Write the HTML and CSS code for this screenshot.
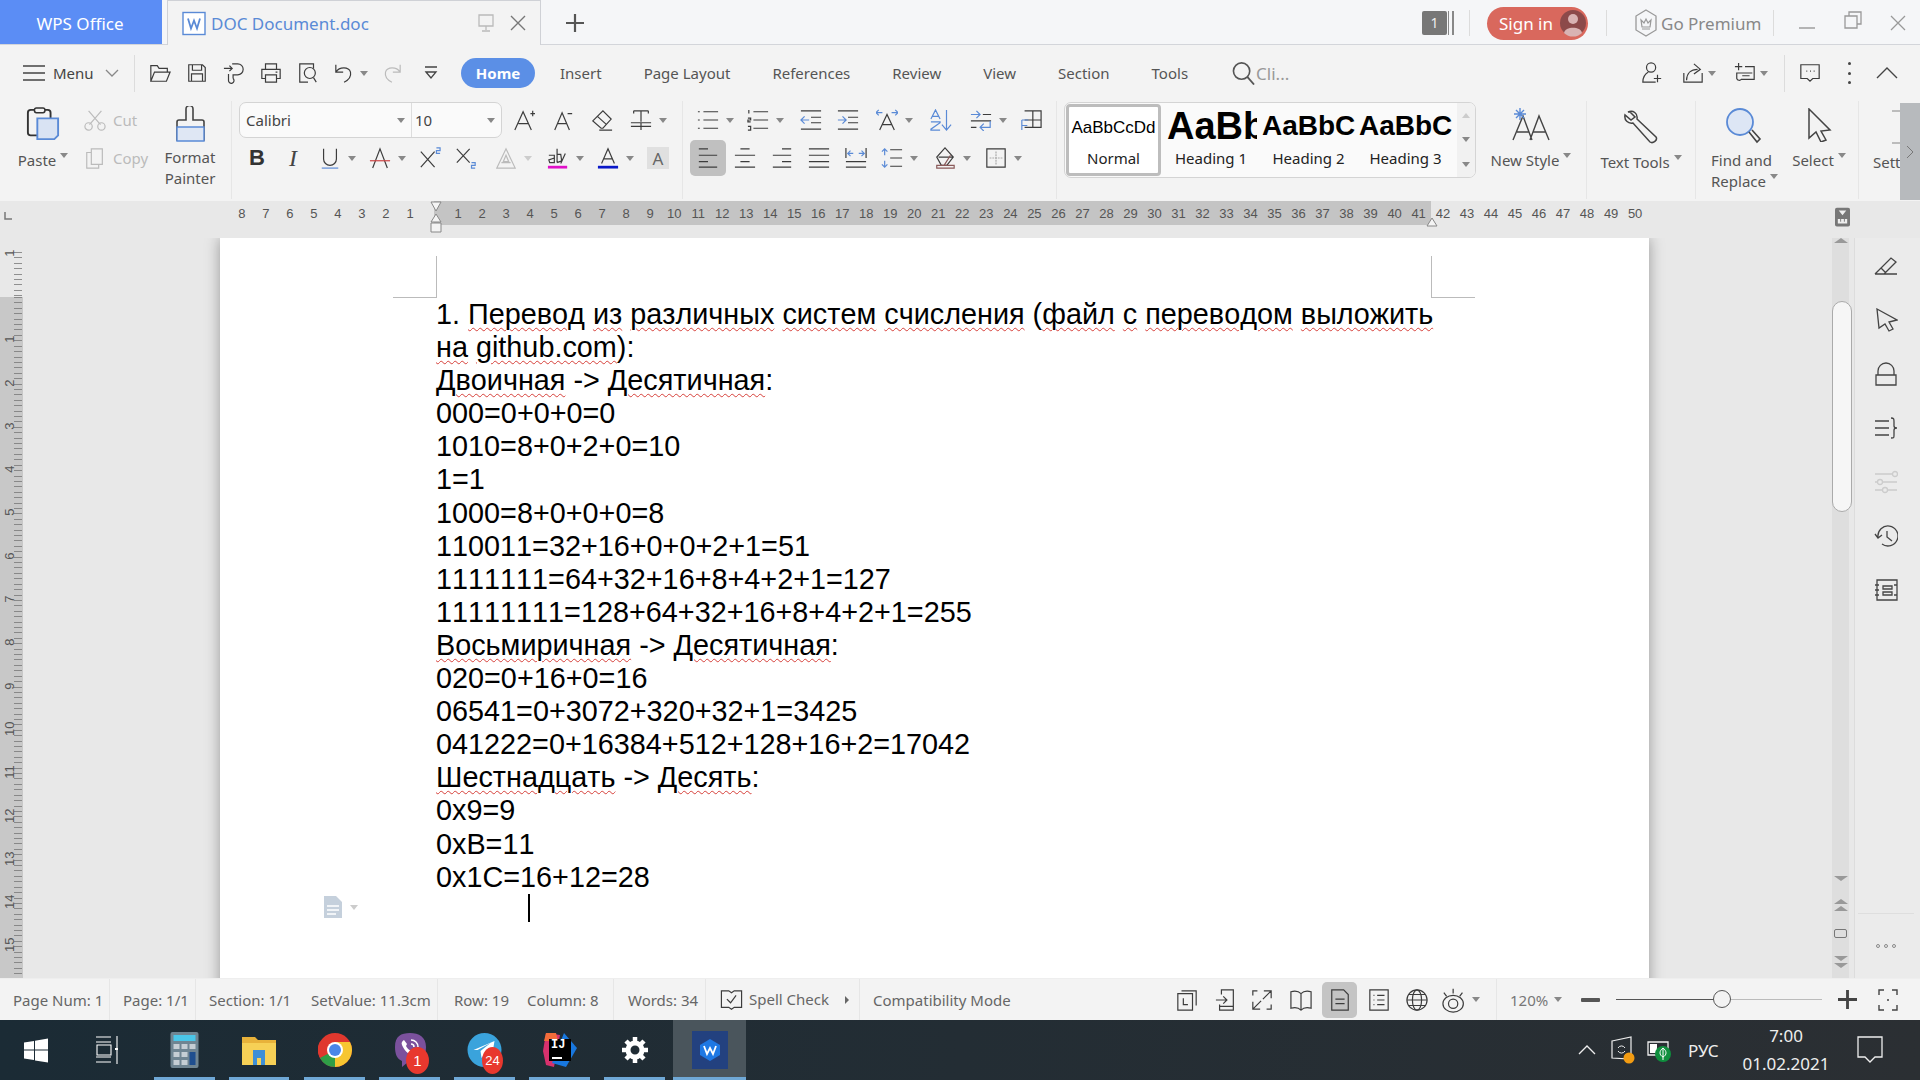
FILE: index.html
```html
<!DOCTYPE html>
<html lang="ru">
<head>
<meta charset="utf-8">
<title>DOC Document.doc - WPS Office</title>
<link rel="stylesheet" href="styles.css">
</head>
<body>
<header class="titlebar">
  <div class="tab-home">WPS Office</div>
  <div class="tab-doc">
    <svg class="i-w" viewBox="0 0 24 24"><rect x="1" y="1" width="22" height="22" fill="#fff" stroke="#5a8ad6" stroke-width="1.4"/><path d="M6 7l3 10 3-8 3 8 3-10" fill="none" stroke="#5a8ad6" stroke-width="1.8"/></svg>
    <span class="doc-name">DOC Document.doc</span>
    <svg class="i-mon" viewBox="0 0 16 18"><path d="M1 1h14v11H1zM8 12v4M4 17h8" fill="none" stroke="#bbb" stroke-width="1.3"/></svg>
    <svg class="i-x" viewBox="0 0 16 16"><path d="M1 1l14 14M15 1L1 15" fill="none" stroke="#777" stroke-width="1.4"/></svg>
  </div>
  <svg class="i-plus" viewBox="0 0 18 18"><path d="M9 0v18M0 9h18" fill="none" stroke="#555" stroke-width="2.2"/></svg>
  <div class="grow"></div>
  <div class="badge">1</div><div class="badge-bars"></div>
  <div class="vsep vsep-a"></div>
  <div class="signin">Sign in
    <svg class="avatar" viewBox="0 0 26 26"><circle cx="13" cy="13" r="13" fill="#8c4a4a"/><circle cx="13" cy="9" r="5" fill="#d9b3b3"/><path d="M4 23c1-7 17-7 18 0a13 13 0 0 1-18 0z" fill="#d9b3b3"/></svg>
  </div>
  <div class="vsep vsep-b"></div>
  <svg class="i-prem" viewBox="0 0 22 28"><path d="M11 1l10 6v14l-10 6-10-6V7z" fill="none" stroke="#999" stroke-width="1.3"/><path d="M6 11l3 3 2-4 2 4 3-3-1 7H7zM7 20h8" fill="none" stroke="#999" stroke-width="1.2"/></svg>
  <span class="premium">Go Premium</span>
  <div class="vsep vsep-c"></div>
  <svg class="i-min" viewBox="0 0 16 2"><path d="M0 1h16" stroke="#999" stroke-width="1.4"/></svg>
  <svg class="i-res" viewBox="0 0 18 18"><path d="M1 5h12v12H1zM5 5V1h12v12h-4" fill="none" stroke="#999" stroke-width="1.3"/></svg>
  <svg class="i-cls" viewBox="0 0 16 16"><path d="M1 1l14 14M15 1L1 15" fill="none" stroke="#999" stroke-width="1.3"/></svg>
</header>

<section class="ribbon">
  <nav class="tabsrow">
    <svg class="i-menu" viewBox="0 0 22 16"><path d="M0 1h22M0 8h22M0 15h22" stroke="#444" stroke-width="1.4"/></svg>
    <span class="menu-t">Menu</span>
    <svg class="i-chev" viewBox="0 0 14 8"><path d="M1 1l6 6 6-6" fill="none" stroke="#888" stroke-width="1.3"/></svg>
    <div class="qsep"></div>
    <div class="qat">
      <span class="q"><svg class="ic" viewBox="0 0 24 24"><path d="M2 21V4h7l2 3h9v4M2 21l4-10h17l-4 10z"/></svg></span>
      <span class="q"><svg class="ic" viewBox="0 0 24 24"><path d="M3 3h15l3 3v15H3zM7 3v6h10V3M6 21v-8h12v8"/></svg></span>
      <span class="q"><svg class="ic" viewBox="0 0 24 24"><path d="M1 7h9M7 4l3 3-3 3M10 2h6a6 6 0 0 1 0 12h-5v4M11 18a3 3 0 1 1-5 2v-7"/></svg></span>
      <span class="q"><svg class="ic" viewBox="0 0 24 24"><path d="M6 8V2h12v6M6 18H2V8h20v10h-4M6 14h12v8H6zM17 11h2"/></svg></span>
      <span class="q"><svg class="ic" viewBox="0 0 24 24"><path d="M18 7V2H3v20h9M21 22l-3-5"/><circle cx="14" cy="12" r="6"/></svg></span>
      <span class="q q-undo"><svg class="ic" viewBox="0 0 24 24"><path d="M2 3v8h8M2 11c4-6 14-6 16 0 1 5-3 9-7 11"/></svg><i class="caret"></i></span>
      <span class="q q-redo"><svg class="ic ic-l" viewBox="0 0 24 24"><path d="M22 3v8h-8M22 11c-4-6-14-6-16 0-1 5 3 9 7 11"/></svg></span>
      <span class="q q-more"><svg class="ic16" viewBox="0 0 16 16"><path d="M2 2h12M3 7l5 6 5-6z"/></svg></span>
    </div>
    <span class="pill">Home</span>
    <span class="t t-ins">Insert</span>
    <span class="t t-pl">Page Layout</span>
    <span class="t t-ref">References</span>
    <span class="t t-rev">Review</span>
    <span class="t t-view">View</span>
    <span class="t t-sec">Section</span>
    <span class="t t-tools">Tools</span>
    <svg class="i-search" viewBox="0 0 24 24"><circle cx="10" cy="10" r="8.5" fill="none" stroke="#555" stroke-width="1.7"/><path d="M16 16l7 8" stroke="#555" stroke-width="1.9"/></svg>
    <span class="cli">Cli...</span>
    <div class="grow"></div>
    <span class="q q-a"><svg class="ic" viewBox="0 0 24 24"><circle cx="11" cy="6" r="5"/><path d="M8 11C3 14 2 18 2 22h14M18 14v8M14 18h8"/></svg></span>
    <span class="q q-b"><svg class="ic" viewBox="0 0 24 24"><path d="M2 12v10h20v-10M5 20c0-8 5-12 12-12M13 2l7 6-7 5"/></svg><i class="caret"></i></span>
    <span class="q q-c"><svg class="ic" viewBox="0 0 24 24"><path d="M5 1v8M1 5h8M12 5h10v14H8a3 3 0 0 1-5-1v-6h17M9 15h8"/></svg><i class="caret"></i></span>
    <div class="qsep qsep-r"></div>
    <span class="q q-d"><svg class="ic" viewBox="0 0 24 24"><path d="M2 3h20v15h-7l-3 3-3-3H2zM8 10h1M12 10h1M16 10h1"/></svg></span>
    <span class="dots"><i></i><i></i><i></i></span>
    <svg class="i-up" viewBox="0 0 22 12"><path d="M1 11L11 1l10 10" fill="none" stroke="#444" stroke-width="1.4"/></svg>
  </nav>

  <div class="toolsrow">
    <div class="grp g-clip">
      <div class="big b-paste">
        <svg class="bi" viewBox="0 0 36 36"><path d="M24 30H5a3 3 0 0 1-3-3V6a3 3 0 0 1 3-3h18a3 3 0 0 1 3 3v6" fill="none" stroke="#333" stroke-width="2"/><rect x="9" y="1" width="11" height="5" rx="2" fill="#f3f3f3" stroke="#333" stroke-width="1.6"/><path d="M12 12h22v18l-4 4H12z" fill="#d9e3f3" stroke="#5a8ad6" stroke-width="2"/></svg>
        <span class="lbl">Paste<i class="caret up"></i></span>
      </div>
      <div class="cc">
        <div class="ccr"><svg class="ic dim" viewBox="0 0 24 24"><path d="M5 2l13 15M19 2L6 17"/><circle cx="5" cy="19" r="4"/><circle cx="19" cy="19" r="4"/></svg><span class="lbl off">Cut</span></div>
        <div class="ccr"><svg class="ic dim" viewBox="0 0 24 24"><path d="M8 2h12v17H8zM8 6H3v17h13v-4"/></svg><span class="lbl off">Copy</span></div>
      </div>
      <div class="big b-fp">
        <svg class="bi" viewBox="0 0 32 36"><path d="M12 14V3a3 3 0 0 1 7 0v11h9a2 2 0 0 1 2 2v18H3V16a2 2 0 0 1 2-2z" fill="none" stroke="#444" stroke-width="1.6"/><path d="M3 21h27v14H3z" fill="#dfe7f4" stroke="#5a8ad6" stroke-width="1.4"/></svg>
        <span class="lbl lh">Format<br>Painter</span>
      </div>
    </div>

    <div class="grp g-font">
      <div class="r">
        <div class="fontbox">
          <span class="fb-name">Calibri<i class="caret"></i></span>
          <span class="fb-size">10<i class="caret"></i></span>
        </div>
        <span class="tb w39"><svg class="ic" viewBox="0 0 24 24"><path d="M2 23L11 3l9 20M6 16h11M19 5h5M21.500 2v6"/></svg></span>
        <span class="tb w39"><svg class="ic" viewBox="0 0 24 24"><path d="M3 23l8-19 8 19M6 16h10M17 5h5"/></svg></span>
        <span class="tb w39"><svg class="ic" viewBox="0 0 24 24"><path d="M2 13L13 2l9 9-9 10h-2zM7 8l10 9M9 23h14"/></svg></span>
        <span class="tb w50"><svg class="ic" viewBox="0 0 24 24"><path d="M4 2h16M4 2v3M20 2v3M12 2v12M1 15h22M1 19h22M12 15v8" /></svg><i class="caret"></i></span>
      </div>
      <div class="r r2">
        <span class="tb w38"><b class="g g-b">B</b></span>
        <span class="tb w32"><i class="g g-i">I</i></span>
        <span class="tb w50"><svg class="ic" viewBox="0 0 24 24"><path d="M5 2v11a7 7 0 0 0 14 0V2"/><path class="st-b" d="M3 23h18"/></svg><i class="caret"></i></span>
        <span class="tb w50"><svg class="ic" viewBox="0 0 24 24"><path d="M4 23L12 2l8 21"/><path class="st-r" d="M1 15h22"/></svg><i class="caret"></i></span>
        <span class="tb w36"><svg class="ic" viewBox="0 0 24 24"><path d="M2 5l15 17M17 5L2 22"/><path class="st-bl" d="M19 1h4v3h-4v3h4"/></svg></span>
        <span class="tb w40"><svg class="ic" viewBox="0 0 24 24"><path d="M2 2l14 15M16 2L2 17"/><path class="st-bl" d="M18 17h4v3h-4v3h4"/></svg></span>
        <span class="tb w52"><svg class="ic dim" viewBox="0 0 24 24"><path d="M2 23L12 2l10 21zM7 17h10"/><path d="M9 16l3-7 3 7z"/></svg><i class="caret light"></i></span>
        <span class="tb w50"><svg class="ic" viewBox="0 0 24 24"><path d="M2 9h6v8H3l-1-3 6-2M11 2v15M11 8h4l1 7-5 2M20 7l-5 11"/><path class="st-m" d="M1 22h21"/></svg><i class="caret"></i></span>
        <span class="tb w45"><svg class="ic" viewBox="0 0 24 24"><path d="M5 18L12 2l7 16M7 13h10"/><path class="st-d" d="M1 22h22"/></svg><i class="caret"></i></span>
        <span class="tb shade">A</span>
      </div>
    </div>

    <div class="grp g-para">
      <div class="r r-p1">
        <span class="tb w50"><svg class="ic" viewBox="0 0 24 24"><path d="M7 3h16M7 12h16M7 21h16M1 3h2M1 12h2M1 21h2"/></svg><i class="caret"></i></span>
        <span class="tb w53"><svg class="ic" viewBox="0 0 24 24"><path d="M7 3h16M7 12h16M7 21h16M2 1v4M1 10h3v2H1v2h3M1 19h3v4H1"/></svg><i class="caret"></i></span>
        <span class="tb w37"><svg class="ic" viewBox="0 0 24 24"><path d="M1 2h22M12 9h11M12 15h11M1 22h22"/><path class="st-bl" d="M10 12H2M5 8l-4 4 4 4"/></svg></span>
        <span class="tb w39"><svg class="ic" viewBox="0 0 24 24"><path d="M1 2h22M12 9h11M12 15h11M1 22h22"/><path class="st-bl" d="M1 12h8M6 8l4 4-4 4"/></svg></span>
        <span class="tb w54"><svg class="ic" viewBox="0 0 24 24"><path d="M4 23L12 6l8 17M7 17h10"/><path class="st-bl" d="M1 4h6M3 1L0 4l3 3M17 4h6M21 1l3 3-3 3"/></svg><i class="caret"></i></span>
        <span class="tb w40"><svg class="ic" viewBox="0 0 24 24"><path class="st-bl" d="M1 11l5-10 5 10M3 8h6M1 14h10v1L1 22v1h10M18 1v21M13 17l5 6 5-6"/></svg></span>
        <span class="tb w50"><svg class="ic" viewBox="0 0 24 24"><path d="M14 6h9M1 13h22M1 20h6"/><path class="st-bl" d="M1 6h9M7 2l4 4-4 4M22 13v7H12M15 16l-4 4 4 4"/></svg><i class="caret"></i></span>
        <span class="tb"><svg class="ic" viewBox="0 0 24 24"><path d="M5 2h18v18H5M14 2v18M5 12h18"/><path class="st-bl" d="M2 12v11M2 12h7M2 18h6"/></svg></span>
      </div>
      <div class="r r-p2">
        <span class="tb active"><svg class="ic" viewBox="0 0 24 24"><path d="M2 2h10M2 9h20M2 16h10M2 22h20"/></svg></span>
        <span class="tb w37"><svg class="ic" viewBox="0 0 24 24"><path d="M7 2h10M1 9h22M7 16h10M1 22h22"/></svg></span>
        <span class="tb w37"><svg class="ic" viewBox="0 0 24 24"><path d="M12 2h10M2 9h20M12 16h10M2 22h20"/></svg></span>
        <span class="tb w37"><svg class="ic" viewBox="0 0 24 24"><path d="M1 2h22M1 9h22M1 16h22M1 22h22"/></svg></span>
        <span class="tb w36"><svg class="ic" viewBox="0 0 24 24"><path d="M1 1v11M23 1v11M1 22h22M1 16h22"/><path class="st-bl" d="M9 7H3M6 4L3 7l3 3M15 7h6M18 4l3 3-3 3"/></svg></span>
        <span class="tb w53"><svg class="ic" viewBox="0 0 24 24"><path d="M10 3h13M10 12h13M10 21h13"/><path class="st-bl" d="M4 2v7M1 5l3-3 3 3M4 15v7M1 19l3 3 3-3"/></svg><i class="caret"></i></span>
        <span class="tb w51"><svg class="ic" viewBox="0 0 24 24"><path d="M12 1l9 10-7 9H8l-5-9zM5 11h16"/><path class="st-br" d="M3 20h19v3H3zM18 9l-7 11"/></svg><i class="caret"></i></span>
        <span class="tb"><svg class="ic" viewBox="0 0 24 24"><path d="M2 2h20v20H2z"/><path class="st-g" d="M12 5v14M5 12h14"/></svg><i class="caret"></i></span>
      </div>
    </div>

    <div class="grp g-style">
      <div class="stylebox">
        <div class="st st-n"><span class="sample s-n">AaBbCcDd</span><span class="st-l">Normal</span></div>
        <div class="st st-1"><span class="sample s-1">AaBb</span><span class="st-l">Heading 1</span></div>
        <div class="st st-2"><span class="sample s-2">AaBbC</span><span class="st-l">Heading 2</span></div>
        <div class="st st-3"><span class="sample s-3">AaBbC</span><span class="st-l">Heading 3</span></div>
        <div class="st-sc"><i class="caret up pale"></i><i class="caret"></i><i class="caret more"></i></div>
      </div>
      <div class="big b-new">
        <svg class="bi bi-new" viewBox="0 0 40 34"><path d="M2 33L12 9l9 24M6 25h12M19 33L28 9l10 24M22 25h13" fill="none" stroke="#444" stroke-width="1.4"/><path d="M9 1v12M3 7h12M5 3l8 8M13 3l-8 8" stroke="#5a8ad6" stroke-width="1.4"/></svg>
        <span class="lbl lbl-nw">New Style<i class="caret up"></i></span>
      </div>
    </div>

    <div class="grp g-tt">
      <div class="big">
        <svg class="bi bi-tt" viewBox="0 0 34 34"><path d="M4 2c5-2 10 1 9 7l19 18c2 3-3 7-6 5L9 13C4 14 0 10 1 5l6 5 4-3-5-5z" fill="none" stroke="#444" stroke-width="1.5"/></svg>
        <span class="lbl lbl-nw lbl-tt">Text Tools<i class="caret up"></i></span>
      </div>
    </div>

    <div class="grp g-fr">
      <div class="big b-find">
        <svg class="bi bi-f" viewBox="0 0 36 36"><ellipse cx="14" cy="14" rx="13" ry="13" fill="#dde6f5" stroke="#5a8ad6" stroke-width="1.8"/><path d="M23 24l8 10 3-3-8-9" fill="none" stroke="#444" stroke-width="1.6"/></svg>
        <span class="lbl lh lbl-l">Find and<br>Replace<i class="caret up"></i></span>
      </div>
      <div class="big b-sel">
        <svg class="bi bi-s" viewBox="0 0 26 34"><path d="M3 1l21 21-9 1 5 9-5 2-5-10-7 6z" fill="none" stroke="#444" stroke-width="1.5"/></svg>
        <span class="lbl lbl-nw lbl-tt">Select<i class="caret up"></i></span>
      </div>
    </div>

    <div class="grp g-set">
      <div class="big">
        <svg class="bi bi-set" viewBox="0 0 30 34"><path d="M2 1h12v32H2M20 12v12" fill="none" stroke="#aaa" stroke-width="1.4"/></svg>
        <span class="lbl lbl-nw lbl-tt">Settings</span>
      </div>
    </div>
    <div class="rib-next"><svg class="i-nx" viewBox="0 0 8 14"><path d="M1 1l6 6-6 6" fill="none" stroke="#777" stroke-width="1"/></svg></div>
  </div>
</section>

<div class="hruler">
  <svg class="i-tabstop" viewBox="0 0 8 8"><path d="M1 0v7h7" fill="none" stroke="#777" stroke-width="1.5"/></svg>
  <div class="rul-l">
    <span>8</span><span>7</span><span>6</span><span>5</span><span>4</span><span>3</span><span>2</span><span>1</span>
  </div>
  <div class="rul-band">
    <span>1</span><span>2</span><span>3</span><span>4</span><span>5</span><span>6</span><span>7</span><span>8</span><span>9</span><span>10</span><span>11</span><span>12</span><span>13</span><span>14</span><span>15</span><span>16</span><span>17</span><span>18</span><span>19</span><span>20</span><span>21</span><span>22</span><span>23</span><span>24</span><span>25</span><span>26</span><span>27</span><span>28</span><span>29</span><span>30</span><span>31</span><span>32</span><span>33</span><span>34</span><span>35</span><span>36</span><span>37</span><span>38</span><span>39</span><span>40</span><span>41</span>
  </div>
  <div class="rul-r">
    <span>42</span><span>43</span><span>44</span><span>45</span><span>46</span><span>47</span><span>48</span><span>49</span><span>50</span>
  </div>
  <svg class="mk-l" viewBox="0 0 12 32"><path d="M1 1h10L6 10zM6 13l5 8H1zM1 22h10v9H1z" fill="#f4f4f4" stroke="#888"/></svg>
  <svg class="mk-r" viewBox="0 0 12 10"><path d="M6 1l5 8H1z" fill="#f4f4f4" stroke="#888"/></svg>
  <svg class="i-rt" viewBox="0 0 16 20"><rect width="16" height="20" rx="2" fill="#777"/><path d="M4 3h8L8 8zM3 12h10v5H3z" fill="#eee"/><path d="M6 12v3M10 12v3" stroke="#777"/></svg>
</div>

<main class="main">
  <div class="vruler">
    <div class="vr-top"><span class="vn vn-top">1</span></div>
    <div class="vr-band">
      <div class="vc"><span class="vn">1</span></div><div class="vc"><span class="vn">2</span></div><div class="vc"><span class="vn">3</span></div><div class="vc"><span class="vn">4</span></div><div class="vc"><span class="vn">5</span></div><div class="vc"><span class="vn">6</span></div><div class="vc"><span class="vn">7</span></div><div class="vc"><span class="vn">8</span></div><div class="vc"><span class="vn">9</span></div><div class="vc"><span class="vn">10</span></div><div class="vc"><span class="vn">11</span></div><div class="vc"><span class="vn">12</span></div><div class="vc"><span class="vn">13</span></div><div class="vc"><span class="vn">14</span></div><div class="vc"><span class="vn">15</span></div>
    </div>
  </div>
  <div class="docarea">
    <article class="page">
      <div class="crop crop-l"></div>
      <div class="crop crop-r"></div>
      <p class="line"><span>1. </span><span class="sp">Перевод</span> <span class="sp">из</span> <span class="sp">различных</span> <span class="sp">систем</span> <span class="sp">счисления</span> (<span class="sp">файл</span> <span class="sp">с</span> <span class="sp">переводом</span> <span class="sp">выложить</span></p>
      <p class="line"><span class="sp">на</span> <span class="sp">github.com</span>):</p>
      <p class="line"><span class="sp">Двоичная</span> -&gt; <span class="sp">Десятичная</span>:</p>
      <p class="line">000=0+0+0=0</p>
      <p class="line">1010=8+0+2+0=10</p>
      <p class="line">1=1</p>
      <p class="line">1000=8+0+0+0=8</p>
      <p class="line">110011=32+16+0+0+2+1=51</p>
      <p class="line">1111111=64+32+16+8+4+2+1=127</p>
      <p class="line">11111111=128+64+32+16+8+4+2+1=255</p>
      <p class="line"><span class="sp">Восьмиричная</span> -&gt; <span class="sp">Десятичная</span>:</p>
      <p class="line">020=0+16+0=16</p>
      <p class="line">06541=0+3072+320+32+1=3425</p>
      <p class="line">041222=0+16384+512+128+16+2=17042</p>
      <p class="line"><span class="sp">Шестнадцать</span> -&gt; <span class="sp">Десять</span>:</p>
      <p class="line">0x9=9</p>
      <p class="line">0xB=11</p>
      <p class="line">0x1C=16+12=28</p>
      <p class="line"><span class="cursor"></span></p>
      <div class="para-mark">
        <svg class="i-para" viewBox="0 0 20 24"><path d="M1 1h12l6 6v16H1z" fill="#c5d0dc"/><path d="M4 11h12M4 15h12M4 19h9" stroke="#fff" stroke-width="1.5"/></svg>
        <i class="caret light"></i>
      </div>
    </article>
  </div>
  <div class="scroll">
    <i class="sa up"></i>
    <div class="thumb"></div>
    <div class="grow"></div>
    <i class="sa dn"></i>
    <i class="sa up dbl"></i><i class="sa up dbl2"></i>
    <i class="sq"></i>
    <i class="sa dn dbl"></i><i class="sa dn dbl2"></i>
  </div>
  <aside class="side">
    <div class="grip"></div>
    <svg class="si" viewBox="0 0 24 24"><path d="M1 20L17 4l5 4-12 12M1 20h22M7 14l5 5"/></svg>
    <svg class="si" viewBox="0 0 24 24"><path d="M3 1l20 11-8 2 4 7-4 2-4-7-6 4z"/></svg>
    <svg class="si" viewBox="0 0 24 24"><path d="M2 13h20v10H2zM4 13V9a8 8 0 0 1 16 0v4"/></svg>
    <svg class="si" viewBox="0 0 24 24"><path d="M1 5h14M1 12h14M1 19h14M17 2c3 0 3 1 3 4v4c0 1 1 2 3 2-2 0-3 1-3 2v5c0 3 0 3-3 3"/></svg>
    <svg class="si faint" viewBox="0 0 24 24"><path d="M1 4h18M1 12h3M9 12h14M1 20h8M14 20h9"/><circle cx="21" cy="4" r="2.500"/><circle cx="6" cy="12" r="2.500"/><circle cx="11" cy="20" r="2.500"/></svg>
    <svg class="si" viewBox="0 0 24 24"><path d="M1 10l3 4 4-3M4 13A10 10 0 1 1 8 20M13 7v6l5 4"/></svg>
    <svg class="si" viewBox="0 0 24 24"><path d="M3 2h20v20H3zM1 7h4M1 12h4M1 17h4M9 8h9v3H9zM9 14h9v3H9zM20 7h3M20 17h3"/></svg>
    <div class="grow"></div>
    <div class="side-more"><i></i><i></i><i></i></div>
  </aside>
</main>

<footer class="status">
  <span class="s s1">Page Num: 1</span>
  <span class="s s2">Page: 1/1</span>
  <span class="s s3">Section: 1/1</span>
  <span class="s s4">SetValue: 11.3cm</span>
  <span class="s s5">Row: 19</span>
  <span class="s s6">Column: 8</span>
  <span class="s s7">Words: 34</span>
  <span class="s s8"><svg class="ic ic-s" viewBox="0 0 24 24"><path d="M1 2h8l3 2 3-2h8v18h-8l-3 2-3-2H1zM7 11l4 4 6-8"/></svg><span class="spell">Spell Check</span><i class="tri"></i></span>
  <span class="s s9">Compatibility Mode</span>
  <div class="grow"></div>
  <span class="v v1"><svg class="ic ic-v" viewBox="0 0 24 24"><path d="M2 5h16v18H2zM6 2h16v16M8 10v7h5"/></svg></span>
  <span class="v v2"><svg class="ic ic-v" viewBox="0 0 24 24"><path d="M7 6V1h13v22H5v-6M1 12h11M9 8l4 4-4 4M5 19h15"/></svg></span>
  <span class="v v3"><svg class="ic ic-v" viewBox="0 0 24 24"><path d="M14 2h8v8M22 2L13 11M10 22H2v-8M2 22l9-9M2 7V2h5M22 17v5h-5"/></svg></span>
  <span class="v v4"><svg class="ic ic-v" viewBox="0 0 24 24"><path d="M12 5v18M12 5C9 2 5 2 1 3v18c4-1 8-1 11 2 3-3 7-3 11-2V3c-4-1-8-1-11 2"/></svg></span>
  <span class="v v5"><svg class="ic ic-v" viewBox="0 0 24 24"><path d="M3 1h13l5 5v17H3zM7 11h10M7 16h10"/></svg></span>
  <span class="v v6"><svg class="ic ic-v" viewBox="0 0 24 24"><path d="M2 1h20v22H2zM10 7h8M10 12h8M10 17h8M6 7h1M6 12h1M6 17h1"/></svg></span>
  <span class="v v7"><svg class="ic ic-v" viewBox="0 0 24 24"><circle cx="12" cy="12" r="11"/><ellipse cx="12" cy="12" rx="5" ry="11"/><path d="M1 12h22M3 6h18M3 18h18"/></svg></span>
  <span class="v v8"><svg class="ic ic-e" viewBox="0 0 30 28"><ellipse cx="13" cy="18" rx="11" ry="9"/><circle cx="13" cy="18" r="5"/><path d="M3 6l3 4M13 2v5M23 6l-3 4"/></svg><i class="caret"></i></span>
  <div class="ssep"></div>
  <span class="zoompct">120%<i class="caret"></i></span>
  <span class="zm"></span>
  <div class="slider"><div class="slider-on"></div><div class="knob"></div></div>
  <svg class="i-zp" viewBox="0 0 20 20"><path d="M10 0v20M0 10h20" stroke="#444" stroke-width="3"/></svg>
  <svg class="i-fs" viewBox="0 0 20 22"><path d="M1 6V1h5M14 1h5v5M19 16v5h-5M6 21H1v-5M9 11h2" fill="none" stroke="#444" stroke-width="1.4"/></svg>
</footer>

<nav class="taskbar">
  <svg class="tk i-win" viewBox="0 0 24 24"><path d="M0 4l10-1.500V11H0zM11 2.300L24 0v11H11zM0 12h10v9.500L0 20zM11 12h13v12l-13-2z" fill="#fff"/></svg>
  <svg class="tk i-tv" viewBox="0 0 24 30"><path d="M1 2h15M1 7h15M1 22h15M1 27h15M2 10h14v10H2zM22 1v28" fill="none" stroke="#fff" stroke-width="1.1"/><path d="M20 13h3v2h-3z" fill="#fff"/></svg>
  <span class="app a-calc"><svg viewBox="0 0 28 36"><rect width="28" height="36" rx="2" fill="#6f8592"/><rect x="3" y="3" width="22" height="6" fill="#4ac6e8"/><path d="M3 12h6v5H3zM11 12h6v5h-6zM19 12h6v5h-6zM3 20h6v5H3zM11 20h6v5h-6zM3 28h6v5H3zM11 28h6v5h-6z" fill="#c5ced4"/><rect x="19" y="20" width="6" height="13" fill="#1f4f8f"/></svg></span>
  <span class="app a-fold"><svg viewBox="0 0 34 30"><path d="M0 2h13l3 3h18v6H0z" fill="#e8b23a"/><path d="M0 8h34v22H0z" fill="#f6d056"/><path d="M11 15h12v15h-4v-7h-4v7h-4z" fill="#3e8fd6"/></svg></span>
  <span class="app a-chrome"><svg viewBox="0 0 34 34"><circle cx="17" cy="17" r="17" fill="#e0382e"/><path d="M17 17L2.300 25.500A17 17 0 0 1 2 8.500z" fill="#e0382e"/><path d="M2 25a17 17 0 0 0 15 9l8-15-8-2z" fill="#2f9e47"/><path d="M17 34A17 17 0 0 0 32 9H17z" fill="#f7c631"/><circle cx="17" cy="17" r="8" fill="#fff"/><circle cx="17" cy="17" r="6" fill="#4a86e8"/></svg></span>
  <span class="app a-viber"><svg viewBox="0 0 34 36"><path d="M17 1C8 1 2 4 2 15c0 7 2 12 7 14v6l6-5h3c10 0 15-5 15-15S26 1 17 1z" fill="#7b519d"/><path d="M11 8c-2 1-3 3-2 5 2 5 6 9 11 11 2 0 4-1 4-3l-4-3-2 1c-2-1-4-3-5-5l1-2z" fill="#fff"/><path d="M18 8c4 0 7 3 7 7M18 12c2 0 3 1 3 3" fill="none" stroke="#fff" stroke-width="1.5"/></svg><b class="num n-v">1</b></span>
  <span class="app a-tg"><svg viewBox="0 0 34 34"><circle cx="17" cy="17" r="17" fill="#3aa3dc"/><path d="M6 17L27 8l-3 18-7-5-3 4-1-7 10-8-13 7z" fill="#fff"/></svg><b class="num n-t">24</b></span>
  <span class="app a-ij"><svg viewBox="0 0 36 36"><path d="M4 1l14 2-6 32-8-2-3-14z" fill="#d8316d"/><path d="M22 1l13 15-11 19-14-4z" fill="#1878e0"/><path d="M4 1l10 0 2 8H2z" fill="#f26c3a"/><rect x="7" y="7" width="22" height="22" fill="#000"/></svg><b class="ij-t">IJ</b><i class="ij-u"></i></span>
  <span class="app a-gear"><svg viewBox="0 0 28 28"><circle cx="14" cy="14" r="7" fill="none" stroke="#fff" stroke-width="5"/><path d="M14 1v5M14 22v5M1 14h5M22 14h5M5 5l3.500 3.500M19.500 19.500L23 23M23 5l-3.500 3.500M8.500 19.500L5 23" stroke="#fff" stroke-width="4.500"/></svg></span>
  <span class="app a-wps"><span class="wps-in"><svg viewBox="0 0 36 38"><rect width="36" height="38" fill="#23417f"/><path d="M18 8l10 6v10l-10 6-10-6V14z" fill="#1e78e4"/><path d="M12 15l3 8 3-6 3 6 3-8" fill="none" stroke="#fff" stroke-width="1.800"/></svg></span></span>
  <div class="grow"></div>
  <svg class="i-tup" viewBox="0 0 18 10"><path d="M1 9l8-8 8 8" fill="none" stroke="#eee" stroke-width="1.300"/></svg>
  <svg class="i-tr1" viewBox="0 0 24 28"><path d="M1 5L20 1v22L1 22z" fill="none" stroke="#eee" stroke-width="1.200"/><path d="M7 12a4 4 0 0 1 7 0M14 15a4 4 0 0 1-7 0" fill="none" stroke="#eee"/><circle cx="18" cy="22" r="5.500" fill="#f39c12"/></svg>
  <svg class="i-tr2" viewBox="0 0 24 26"><path d="M1 5h20v13H1z" fill="none" stroke="#eee" stroke-width="1.300"/><rect x="3" y="7" width="7" height="9" fill="#fff"/><circle cx="16" cy="17" r="8" fill="#0f8f3e"/><path d="M16 11v12M16 11c4 3 4 7 0 9-4-2-4-6 0-9z" fill="none" stroke="#fff"/></svg>
  <span class="lang">РУС</span>
  <div class="clock"><span>7:00</span><span>01.02.2021</span></div>
  <svg class="i-note" viewBox="0 0 26 28"><path d="M1 1h24v20h-7l-5 5-5-5H1z" fill="none" stroke="#eee" stroke-width="1.300"/></svg>
</nav>
</body>
</html>
```
FILE: styles.css
```css
* { box-sizing: border-box; }
html, body { margin: 0; padding: 0; }
body {
  width: 1920px; height: 1080px; overflow: hidden;
  display: flex; flex-direction: column;
  background: #f3f3f3; color: #444;
  font-family: "Noto Sans", "Liberation Sans", sans-serif;
}
svg { display: block; flex: none; }
.grow { flex: 1; }
i { font-style: normal; }

/* Title bar */
.titlebar { height: 45px; flex: none; display: flex; align-items: center; background: #f5f6f8; border-bottom: 1px solid #d3d5da; padding-top: 2px; }
.tab-home { width: 162px; height: 44px; margin-top: -2px; background: #5b8df5; color: #fff; font-size: 17px; display: flex; align-items: center; justify-content: center; padding: 2px 2px 0 0; }
.tab-doc { width: 374px; height: 45px; margin-top: -2px; margin-left: 5px; background: #f3f3f3; border: 1px solid #cfd1d6; border-bottom: 0; display: flex; align-items: center; padding: 1px 0 0 14px; }
.i-w { width: 24px; height: 25px; }
.doc-name { margin-left: 5px; width: 267px; font-size: 17px; color: #5a8ad6; white-space: nowrap; }
.i-mon { width: 16px; height: 18px; }
.i-x { width: 16px; height: 16px; margin-left: 16px; }
.i-plus { width: 18px; height: 18px; margin-left: 25px; }
.badge { width: 25px; height: 24px; background: #777; color: #eee; border-radius: 2px; font-size: 14px; text-align: center; line-height: 24px; }
.badge-bars { width: 6px; height: 24px; border-left: 1px solid #888; border-right: 2px solid #888; margin-left: 1px; }
.vsep { width: 1px; height: 26px; background: #dcdcdc; }
.vsep-a { margin: 0 17px 0 15px; }
.signin { width: 101px; height: 33px; border-radius: 17px; background: #d9685d; color: #fff; font-size: 17px; display: flex; align-items: center; justify-content: space-between; padding: 0 2px 0 12px; }
.avatar { width: 26px; height: 28px; }
.vsep-b { margin: 0 28px 0 18px; }
.i-prem { width: 22px; height: 28px; }
.premium { font-size: 17px; color: #888; margin-left: 4px; width: 102px; white-space: nowrap; }
.vsep-c { margin: 0 25px 0 10px; }
.i-min { width: 16px; height: 2px; margin-top: 10px; }
.i-res { width: 18px; height: 18px; margin-left: 29px; margin-top: -6px; }
.i-cls { width: 16px; height: 16px; margin-left: 28px; margin-right: 14px; }

/* Ribbon */
.ribbon { height: 156px; flex: none; background: #f3f3f3; position: relative; }
.tabsrow { height: 56px; display: flex; align-items: center; padding-left: 23px; }
.i-menu { width: 22px; height: 16px; }
.menu-t { margin-left: 8px; font-size: 15px; width: 52px; }
.i-chev { width: 14px; height: 8px; }
.qsep { width: 1px; height: 37px; background: #dcdcdc; margin-left: 15px; }
.qat { display: flex; margin-left: 14px; }
.q { width: 37px; height: 24px; display: flex; align-items: center; gap: 4px; flex: none; }
.q-undo { width: 46px; }
.q-redo { width: 43px; }
.q-more { width: 38px; }
.ic { width: 22px; height: 22px; fill: none; stroke: #3c3c3c; stroke-width: 1.3; }
.ic-l { stroke: #bbb; }
.ic16 { width: 16px; height: 16px; fill: none; stroke: #444; stroke-width: 1.3; }
.dim { stroke: #bbb; }
.caret { display: inline-block; width: 0; height: 0; border: 4px solid transparent; border-top: 5px solid #888; border-bottom: 0; flex: none; }
.caret.up { vertical-align: 8px; margin-left: 4px; }
.caret.light { border-top-color: #ccc; }
.pill { width: 74px; height: 30px; border-radius: 15px; background: #5b8fe6; color: #fff; font-weight: 700; font-size: 15px; display: flex; align-items: center; justify-content: center; }
.t { font-size: 15px; color: #555; white-space: nowrap; margin-left: 42px; }
.t-ins { margin-left: 25px; }
.i-search { width: 23px; height: 24px; margin-left: 44px; }
.cli { font-size: 17px; color: #999; margin-left: 1px; }
.q-a { width: 41px; }
.q-b { width: 52px; }
.q-c { width: 50px; }
.qsep-r { margin: 0 14px 0 0; }
.q-d { width: 44px; }
.dots { width: 33px; height: 22px; display: flex; flex-direction: column; justify-content: space-between; padding-left: 5px; }
.dots i { width: 3px; height: 3px; background: #444; border-radius: 50%; }
.i-up { width: 22px; height: 12px; margin-right: 22px; }

.toolsrow { height: 100px; display: flex; position: relative; }
.grp { height: 98px; border-right: 1px solid #e6e6e6; display: flex; flex: none; }
.g-clip { width: 232px; padding-left: 14px; }
.big { display: flex; flex-direction: column; align-items: center; flex: none; }
.bi { width: 34px; height: 36px; margin-top: 5px; }
.lbl { font-size: 15px; color: #555; white-space: nowrap; }
.lbl.lh { line-height: 21px; text-align: center; }
.off { color: #bbb; }
.b-paste { width: 58px; }
.b-paste .lbl { margin-top: 8px; }
.cc { width: 76px; margin-left: 12px; padding-top: 7px; display: flex; flex-direction: column; gap: 15px; }
.ccr { display: flex; align-items: center; gap: 7px; height: 23px; }
.b-fp { width: 60px; }
.b-fp .lbl { margin-top: 5px; }

.g-font { width: 451px; padding: 1px 0 0 7px; flex-direction: column; gap: 2px; }
.r { height: 36px; display: flex; align-items: center; }
.fontbox { width: 263px; height: 36px; border: 1px solid #d4d4d4; border-radius: 7px; background: #fafafa; display: flex; font-size: 15px; color: #444; margin-right: 11px; }
.fb-name { width: 172px; padding: 0 6px; border-right: 1px solid #ddd; display: flex; align-items: center; justify-content: space-between; }
.fb-size { flex: 1; padding: 0 6px 0 3px; display: flex; align-items: center; justify-content: space-between; }
.tb { display: flex; align-items: center; gap: 7px; height: 36px; flex: none; }
.w32 { width: 32px; } .w36 { width: 36px; } .w37 { width: 37px; } .w38 { width: 38px; } .w39 { width: 39px; } .w40 { width: 40px; }
.w45 { width: 45px; } .w50 { width: 50px; } .w51 { width: 51px; } .w52 { width: 52px; } .w53 { width: 53px; } .w54 { width: 54px; }
.r2 { padding-left: 10px; }
.g { font-size: 22px; color: #333; line-height: 1; font-family: "Liberation Sans", sans-serif; }
.g-b { font-weight: 700; }
.g-i { font-family: "Liberation Serif", serif; margin-left: 2px; font-size: 24px; font-weight: 400; font-style: italic; color: #444; }
.st-b { stroke: #5a8ad6; } .st-r { stroke: #c44; } .st-bl { stroke: #5a8ad6; }
.st-m { stroke: #e010c8; stroke-width: 3; } .st-d { stroke: #0a18c8; stroke-width: 3; }
.st-br { stroke: #8a5a5a; } .st-g { stroke: #aaa; stroke-dasharray: 2 1; }
.shade { width: 22px; height: 22px; background: #e0e0e0; justify-content: center; color: #666; font-size: 17px; margin-left: 5px; }

.g-para { width: 374px; padding: 1px 0 0 14px; flex-direction: column; gap: 2px; }
.r-p2 { margin-left: -7px; }
.active { width: 36px; background: #c0c0c0; border-radius: 5px; justify-content: center; margin-right: 8px; }

.g-style { width: 530px; padding: 1px 0 0 7px; }
.stylebox { width: 412px; height: 76px; border: 1px solid #d4d4d4; border-radius: 7px; background: #fafafa; display: flex; overflow: hidden; flex: none; position: relative; padding: 1px 0 0 1px; }
.st { display: flex; flex-direction: column; align-items: center; overflow: hidden; flex: none; height: 72px; }
.st-n { width: 95px; border: 3px solid #bdbdbd; border-radius: 4px; background: #fff; }
.st-1 { width: 92px; margin-left: 4px; }
.st-2 { width: 93px; margin-left: 5px; }
.st-3 { width: 93px; margin-left: 4px; }
.sample { height: 44px; display: flex; align-items: center; align-self: flex-start; color: #000; font-family: "Liberation Sans", sans-serif; white-space: nowrap; font-weight: 700; }
.s-n { font-weight: 400; font-size: 17px; height: 41px; align-self: center; }
.s-1 { font-size: 38px; margin-left: 2px; }
.s-2, .s-3 { font-size: 28px; }
.st-l { font-size: 15px; color: #222; white-space: nowrap; }
.st-sc { position: absolute; right: 0; top: 0; width: 18px; height: 100%; background: #f1f1f1; display: flex; flex-direction: column; align-items: center; justify-content: space-around; }
.st-sc .caret.up { transform: rotate(180deg); vertical-align: 0; margin: 0; }
.caret.pale { border-top-color: #ccc; }
.caret.more { border-top-color: #888; }
.b-new { width: 98px; margin-left: 6px; }
.bi-new { width: 40px; height: 34px; margin-top: 5px; }
.b-new .lbl { margin-top: 9px; }
.g-tt { width: 109px; justify-content: center; }
.bi-tt { width: 34px; height: 34px; margin-top: 9px; }
.lbl-tt { margin-top: 8px; }
.g-fr { width: 163px; padding-left: 15px; }
.b-find { width: 74px; align-items: flex-start; }
.bi-f { width: 36px; height: 36px; margin: 7px 0 0 15px; }
.b-find .lbl { margin-top: 6px; text-align: left; }
.b-sel { width: 60px; margin-left: 4px; }
.bi-s { width: 26px; height: 34px; margin-top: 7px; }
.g-set { border: 0; padding-left: 14px; width: 60px; }
.g-set .big { align-items: flex-start; }
.bi-set { width: 30px; height: 34px; margin: 9px 0 0 17px; }
.rib-next { position: absolute; right: 0; top: 2px; width: 20px; height: 97px; background: #b7babd; display: flex; align-items: center; justify-content: center; }
.i-nx { width: 8px; height: 14px; }

/* Horizontal ruler */
.hruler { height: 37px; flex: none; background: #e8e8e8; display: flex; position: relative; font-size: 13px; color: #555; font-family: "Liberation Sans", sans-serif; }
.hruler span { width: 24.02px; text-align: center; line-height: 25px; flex: none; }
.i-tabstop { width: 8px; height: 8px; margin: 11px 0 0 4px; }
.rul-l { display: flex; margin-left: 218px; height: 24px; width: 204px; padding-right: 12px; justify-content: flex-end; }
.rul-band { display: flex; height: 24px; width: 997px; background: #c4c4c4; padding-left: 12px; overflow: hidden; }
.rul-r { display: flex; height: 24px; }
.mk-l { position: absolute; left: 430px; top: 0; width: 12px; height: 32px; }
.mk-r { position: absolute; left: 1426px; top: 16px; width: 12px; height: 10px; }
.i-rt { position: absolute; left: 1835px; top: 6px; width: 15px; height: 20px; }

/* Main */
.main { height: 740px; flex: none; display: flex; background: #e8e8e8; overflow: hidden; }
.vruler { width: 23px; flex: none; font-size: 13px; color: #555; font-family: "Liberation Sans", sans-serif; }
.vr-top { height: 59px; background: repeating-linear-gradient(to bottom, #8f8f8f 0 1px, transparent 1px 5.4px) 14px 14px / 8px 100% no-repeat; position: relative; }
.vr-band { height: 681px; padding-top: 6px; overflow: hidden; background: repeating-linear-gradient(to bottom, #888 0 1px, transparent 1px 5.41px) 14px 0 / 8px 100% no-repeat, #c8c8c8; }
.vc { height: 43.3px; display: flex; align-items: flex-end; padding-left: 3px; }
.vn { display: block; width: 14px; height: 14px; line-height: 14px; text-align: center; transform: rotate(-90deg); background: transparent; }
.vn-top { position: absolute; left: 3px; top: 8px; }
.docarea { width: 1809px; flex: none; position: relative; overflow: hidden; padding-left: 197px; }
.page { width: 1429px; height: 1000px; background: #fff; box-shadow: 0 0 14px rgba(0,0,0,.35); padding: 60px 0 0 216px; position: relative; color: #000; font-family: "Liberation Sans", sans-serif; font-kerning: none; }
.line { margin: 0; font-size: 28.8px; line-height: 33.1px; height: 33.1px; white-space: nowrap; }
.sp { text-decoration: underline wavy #d6403a 1px; text-underline-offset: 3px; }
.cursor { display: inline-block; width: 2px; height: 28px; background: #000; margin-left: 92px; vertical-align: -2.5px; }
.crop { position: absolute; top: 18px; width: 44px; height: 42px; }
.crop-l { left: 173px; border-right: 1px solid #bbb; border-bottom: 1px solid #bbb; }
.crop-r { left: 1211px; border-left: 1px solid #bbb; border-bottom: 1px solid #bbb; }
.para-mark { position: absolute; left: 103px; top: 657px; display: flex; align-items: center; gap: 7px; }
.i-para { width: 20px; height: 24px; }

.scroll { width: 22px; flex: none; position: relative; background: linear-gradient(to right, #dedede 17px, #e8e8e8 17px); display: flex; flex-direction: column; align-items: flex-start; }
.sa { width: 0; height: 0; border-left: 7px solid transparent; border-right: 7px solid transparent; margin-left: 2px; flex: none; }
.sa.up { border-bottom: 5px solid #999; }
.sa.dn { border-top: 5px solid #999; }
.thumb { width: 20px; height: 211px; margin-top: 58px; background: #f6f6f6; border: 1px solid #aaa; border-radius: 10px; flex: none; }
.sa.dbl { margin-top: 18px; }
.sa.dbl2 { margin-top: 2px; }
.sq { width: 13px; height: 9px; border: 1px solid #777; border-radius: 2px; margin: 18px 0 0 2px; flex: none; }
.scroll > .sa.dn:last-child { margin-bottom: 10px; }
.side { width: 66px; flex: none; border-left: 1px solid #dcdcdc; display: flex; flex-direction: column; align-items: center; padding: 0 4px 0 0; background: #ebebeb; }
.grip { width: 24px; height: 4px; border-top: 1px solid #bbb; border-bottom: 1px solid #bbb; margin: -18px 0 30px; flex: none; }
.si { width: 24px; height: 24px; fill: none; stroke: #444; stroke-width: 1.3; margin-bottom: 30px; }
.si.faint { stroke: #ccc; }
.side-more { width: 56px; border-top: 1px solid #dedede; height: 65px; display: flex; justify-content: center; align-items: center; gap: 4px; }
.side-more i { width: 4px; height: 4px; border: 1px solid #888; border-radius: 50%; }

/* Status bar */
.status { height: 42px; flex: none; display: flex; align-items: center; background: #f3f3f3; font-size: 15px; color: #666; border-top: 1px solid #eee; }
.s { white-space: nowrap; height: 100%; display: flex; align-items: center; }
.s1 { width: 110px; padding-left: 13px; border-right: 1px solid #e6e6e6; }
.s2 { width: 86px; padding-left: 13px; border-right: 1px solid #e6e6e6; }
.s3 { width: 115px; padding-left: 13px; }
.s4 { width: 127px; border-right: 1px solid #e6e6e6; }
.s5 { width: 89px; padding-left: 16px; }
.s6 { width: 87px; border-right: 1px solid #e6e6e6; }
.s7 { width: 92px; padding-left: 14px; border-right: 1px solid #e6e6e6; }
.s8 { width: 154px; padding-left: 14px; border-right: 1px solid #e6e6e6; }
.ic-s { width: 23px; height: 22px; }
.spell { margin-left: 6px; margin-top: -2px; }
.tri { width: 0; height: 0; border-left: 4px solid #666; border-top: 4px solid transparent; border-bottom: 4px solid transparent; margin-left: 16px; }
.s9 { padding-left: 13px; }
.v { height: 36px; display: flex; align-items: center; justify-content: center; flex: none; gap: 2px; }
.ic-v { width: 22px; height: 24px; }
.v1 { width: 46px; } .v2 { width: 32px; } .v3 { width: 40px; } .v4 { width: 38px; margin-right: 2px; }
.v5 { width: 35px; background: #c4c4c4; border-radius: 5px; margin-right: 2px; } .v6 { width: 39px; } .v7 { width: 38px; } .v8 { width: 48px; }
.ic-e { width: 30px; height: 26px; }
.ssep { width: 1px; height: 100%; background: #e6e6e6; margin-left: 12px; }
.zoompct { margin-left: 13px; width: 56px; display: flex; align-items: center; gap: 6px; color: #777; flex: none; }
.zm { width: 19px; height: 4px; background: #555; border-radius: 1px; margin-left: 15px; flex: none; }
.slider { width: 206px; height: 1px; margin-left: 16px; background: #bbb; position: relative; flex: none; }
.slider-on { width: 106px; height: 1px; background: #555; }
.knob { position: absolute; left: 97px; top: -9px; width: 18px; height: 18px; border-radius: 50%; background: #f3f3f3; border: 1.5px solid #555; }
.i-zp { width: 19px; height: 19px; margin-left: 16px; }
.i-fs { width: 20px; height: 22px; margin: 0 22px 0 21px; }

/* Taskbar */
.taskbar { height: 60px; flex: none; display: flex; align-items: center; position: relative; background: linear-gradient(to right, #1b2b35, #2b2f33); color: #eee; }
.tk { flex: none; }
.i-win { width: 24px; height: 25px; margin-left: 24px; }
.i-tv { width: 24px; height: 30px; margin: 0 35px 0 47px; }
.app { position: relative; width: 75px; height: 60px; display: flex; align-items: center; justify-content: center; flex: none; box-shadow: inset 0 -3px 0 #6fa8d6; }
.app svg { flex: none; }
.a-calc { width: 61px; margin-right: 14px; }
.a-calc svg { width: 29px; height: 36px; }
.a-fold { width: 60px; margin-right: 15px; }
.a-fold svg { width: 34px; height: 30px; }
.a-chrome { width: 61px; margin-right: 14px; }
.a-chrome svg { width: 34px; height: 34px; }
.a-viber { width: 61px; margin-right: 14px; }
.a-viber svg { width: 34px; height: 36px; }
.a-tg { width: 61px; margin-right: 14px; }
.a-tg svg { width: 35px; height: 34px; }
.a-ij { width: 61px; margin-right: 14px; }
.a-ij svg { width: 36px; height: 36px; }
.a-gear { width: 61px; margin-right: 8px; }
.a-gear svg { width: 28px; height: 28px; }
.a-wps { width: 73px; background: #4a555c; }
.wps-in svg { width: 36px; height: 38px; }
.num { position: absolute; background: #e8382e; color: #fff; font-weight: 400; font-size: 13px; border-radius: 50%; display: flex; align-items: center; justify-content: center; font-family: "Liberation Sans", sans-serif; }
.n-v { width: 23px; height: 27px; left: 27px; top: 27px; font-size: 15px; }
.n-t { width: 21px; height: 27px; left: 28px; top: 27px; }
.ij-t { position: absolute; left: 22px; top: 18px; color: #fff; font-size: 12px; font-family: "Liberation Mono", monospace; }
.ij-u { position: absolute; left: 23px; top: 37px; width: 10px; height: 2px; background: #fff; }
.i-tup { width: 18px; height: 10px; margin-right: 15px; }
.i-tr1 { width: 24px; height: 28px; margin-right: 12px; }
.i-tr2 { width: 24px; height: 26px; margin-right: 17px; }
.lang { font-size: 17px; width: 34px; white-space: nowrap; }
.clock { width: 112px; margin-left: 8px; display: flex; flex-direction: column; align-items: center; font-size: 17px; gap: 8px; line-height: 20px; white-space: nowrap; }
.i-note { width: 26px; height: 28px; margin: 0 37px 0 15px; }
```
